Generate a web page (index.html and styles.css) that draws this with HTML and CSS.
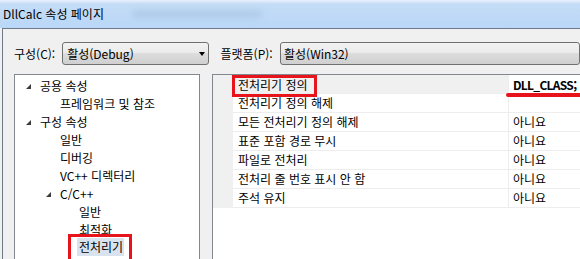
FILE: index.html
```html
<!DOCTYPE html>
<html lang="ko">

<head>
    <meta charset="UTF-8">
    <meta name="viewport" content="width=device-width, initial-scale=1.0">
    <title>DllCalc 속성 페이지</title>
    <link rel="stylesheet" href="styles.css">
</head>

<body>
    <div class="titlebar">
        <span class="title">DllCalc 속성 페이지</span>
        <span class="smudge"></span>
    </div>
    <div class="dialog">
        <div class="config-bar">
            <span class="label label-config">구성(C):</span>
            <div class="combo combo-config">
                <span>활성(Debug)</span>
                <i class="caret"></i>
            </div>
            <span class="label label-platform">플랫폼(P):</span>
            <div class="combo combo-platform">
                <span>활성(Win32)</span>
            </div>
        </div>
        <div class="panes">
            <ul class="tree">
                <li class="l0"><i class="twisty"></i>공용 속성</li>
                <li class="l1">프레임워크 및 참조</li>
                <li class="l0"><i class="twisty"></i>구성 속성</li>
                <li class="l1">일반</li>
                <li class="l1">디버깅</li>
                <li class="l1">VC++ 디렉터리</li>
                <li class="l1"><i class="twisty"></i>C/C++</li>
                <li class="l2">일반</li>
                <li class="l2">최적화</li>
                <li class="l2 current"><span class="sel">전처리기</span></li>
            </ul>
            <div class="grid">
                <div class="gutter"></div>
                <div class="rows">
                    <div class="row selected">
                        <div class="name marked">전처리기 정의</div>
                        <div class="value modified"><span class="underline">DLL_CLASS;</span></div>
                    </div>
                    <div class="row">
                        <div class="name">전처리기 정의 해제</div>
                        <div class="value"></div>
                    </div>
                    <div class="row">
                        <div class="name">모든 전처리기 정의 해제</div>
                        <div class="value">아니요</div>
                    </div>
                    <div class="row">
                        <div class="name">표준 포함 경로 무시</div>
                        <div class="value">아니요</div>
                    </div>
                    <div class="row">
                        <div class="name">파일로 전처리</div>
                        <div class="value">아니요</div>
                    </div>
                    <div class="row">
                        <div class="name">전처리 줄 번호 표시 안 함</div>
                        <div class="value">아니요</div>
                    </div>
                    <div class="row">
                        <div class="name">주석 유지</div>
                        <div class="value">아니요</div>
                    </div>
                </div>
            </div>
        </div>
    </div>
</body>

</html>
```

FILE: styles.css
```css
body {
    margin: 0;
    padding: 0;
    width: 580px;
    height: 259px;
    overflow: hidden;
    background-color: #f0f0f0;
    font-family: "Noto Sans CJK KR", "Malgun Gothic", sans-serif;
    font-size: 12px;
    color: #000;
}

/* 창 제목 표시줄 */
.titlebar {
    height: 28px;
    display: flex;
    align-items: center;
    padding-left: 3px;
    background: linear-gradient(180deg, #e9f1fb 0px, #c4dcf6 4px, #b9d7f8 100%);
    overflow: hidden;
}

.title {
    line-height: 16px;
}

.smudge {
    width: 130px;
    height: 6px;
    margin-left: 28px;
    background: #9fbbd8;
    border-radius: 3px;
    filter: blur(3px);
    opacity: 0.6;
}

.dialog {
    margin-left: 2px;
    height: 230px;
    border-left: 1px solid #6f7a86;
    border-top: 1px solid #6f7a86;
    background-color: #f0f0f0;
}

.config-bar {
    display: flex;
    align-items: center;
    padding: 13px 0 0 11px;
    height: 23px;
}

.label {
    line-height: 16px;
}

.label-config {
    width: 55px;
}

.label-platform {
    width: 68px;
    margin-left: 12px;
}

.combo {
    box-sizing: border-box;
    height: 23px;
    display: flex;
    align-items: center;
    justify-content: space-between;
    border: 1px solid #707070;
    border-radius: 3px;
    background: linear-gradient(180deg, #f3f3f3 0%, #ebebeb 45%, #dddddd 50%, #cfcfcf 100%);
}

.combo-config {
    width: 166px;
    padding: 0 3px 0 4px;
}

.combo-platform {
    width: 300px;
    flex-shrink: 0;
    padding-left: 3px;
}

.caret {
    width: 0;
    height: 0;
    border-left: 3.5px solid transparent;
    border-right: 3.5px solid transparent;
    border-top: 4px solid #000;
    margin-top: 1px;
}

.panes {
    display: flex;
    margin-top: 9px;
    padding-left: 11px;
}

/* 왼쪽 트리 */
.tree {
    box-sizing: border-box;
    width: 186px;
    height: 200px;
    margin: 0;
    padding: 1px 0 0 0;
    list-style: none;
    background: #fff;
    border: 1px solid #828790;
    flex-shrink: 0;
}

.tree li {
    height: 18px;
    display: flex;
    align-items: center;
    white-space: nowrap;
}

.tree .l0 {
    padding-left: 25px;
}

.tree .l1 {
    padding-left: 45px;
}

.tree .l2 {
    padding-left: 64px;
}

.twisty {
    width: 14px;
    margin-left: -14px;
    height: 5px;
    margin-top: 2px;
}

.twisty::before {
    content: "";
    display: block;
    width: 0;
    height: 0;
    border-left: 5px solid transparent;
    border-bottom: 5px solid #3b3b3b;
}

.tree .current {
    position: relative;
}

.sel {
    height: 18px;
    line-height: 18px;
    background: #d9e3ee;
    padding: 0 1px 0 2px;
    margin-left: -2px;
}

/* 빨간 표시 */
.tree .current::after {
    content: "";
    position: absolute;
    left: 53px;
    top: -4px;
    width: 64px;
    height: 30px;
    box-sizing: border-box;
    border: 3px solid #e8141c;
}

.name.marked {
    position: relative;
}

.name.marked::after {
    content: "";
    position: absolute;
    left: -1px;
    top: 0;
    width: 85px;
    height: 22px;
    box-sizing: border-box;
    border: 3px solid #e8141c;
}

.underline {
    position: relative;
}

.underline::after {
    content: "";
    position: absolute;
    left: -7px;
    right: -20px;
    bottom: -4px;
    height: 4px;
    border-radius: 2px;
    background: #e8141c;
}

/* 오른쪽 속성 표 */
.grid {
    margin-left: 12px;
    width: 400px;
    height: 200px;
    flex-shrink: 0;
    display: flex;
    align-items: flex-start;
    background: #fff;
    border-left: 1px solid #828790;
    border-top: 1px solid #828790;
}

.gutter {
    width: 20px;
    height: 133px;
    background: #f0f0f0;
}

.rows {
    flex: 1;
}

.row {
    display: flex;
    height: 18px;
    border-bottom: 1px solid #ededed;
}

.row .name {
    width: 270px;
    padding-left: 5px;
    line-height: 18px;
    white-space: nowrap;
}

.row .value {
    flex: 1;
    padding-left: 4px;
    line-height: 18px;
    border-left: 1px solid #ededed;
    white-space: nowrap;
}

.row.selected .name,
.row.selected .value {
    padding-top: 1px;
}

.row.selected .name {
    background: #f0f0f0;
}

.value.modified {
    font-weight: bold;
    letter-spacing: -0.7px;
}
```
